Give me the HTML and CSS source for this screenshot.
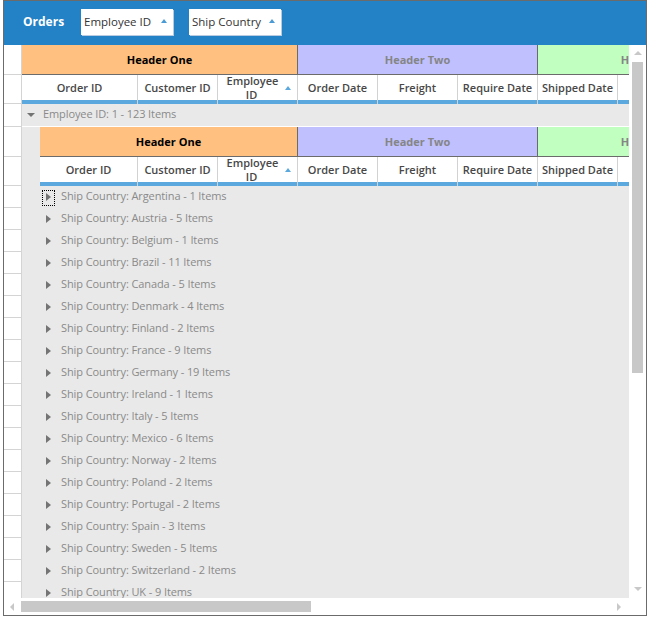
FILE: index.html
```html
<!DOCTYPE html>
<html>
<head>
<meta charset="utf-8">
<link rel="stylesheet" href="styles.css">
</head>
<body>
<div class="frame">
  <div class="toolbar">
    <span class="title">Orders</span>
    <div class="dd"><span>Employee ID</span><span class="dd-arrow"></span></div>
    <div class="dd"><span>Ship Country</span><span class="dd-arrow"></span></div>
  </div>
  <div class="body">
    <div class="main">
      <div class="viewport">
        <div class="hrow1">
          <div class="rh rh-h1"></div>
          <div class="band band-one w275">Header One</div>
          <div class="band band-two">Header Two</div>
          <div class="band band-three">Header Three</div>
        </div>
        <div class="hrow2">
          <div class="rh rh-h2"></div>
          <div class="ch w116">Order ID</div>
          <div class="ch">Customer ID</div>
          <div class="ch sort"><span>Employee ID</span><span class="sort-arrow"></span></div>
          <div class="ch">Order Date</div>
          <div class="ch">Freight</div>
          <div class="ch">Require Date</div>
          <div class="ch">Shipped Date</div>
          <div class="ch"></div>
        </div>
        <div class="grow">
          <div class="rh rh-group"></div>
          <div class="group-cell">
            <span class="tog-down"></span>
            <span class="gtext">Employee ID: 1 - 123 Items</span>
          </div>
        </div>
        <div class="nested">
          <div class="rh-col">
            <div class="rh rh-n1"></div>
            <div class="rh rh-n2"></div>
          </div>
          <div class="indent"></div>
          <div class="ngrid">
            <div class="hrow1 nrow1">
              <div class="band band-one w257">Header One</div>
              <div class="band band-two">Header Two</div>
              <div class="band band-three">Header Three</div>
            </div>
            <div class="hrow2">
              <div class="ch w98">Order ID</div>
              <div class="ch">Customer ID</div>
              <div class="ch sort"><span>Employee ID</span><span class="sort-arrow"></span></div>
              <div class="ch">Order Date</div>
              <div class="ch">Freight</div>
              <div class="ch">Require Date</div>
              <div class="ch">Shipped Date</div>
              <div class="ch"></div>
            </div>
          </div>
        </div>
        <div class="rows">
          <div class="row"><div class="rh rh-row"></div><div class="indent"></div><div class="sub"><span class="tog-right focus"></span><span class="gtext">Ship Country: Argentina - 1 Items</span></div></div>
          <div class="row"><div class="rh rh-row"></div><div class="indent"></div><div class="sub"><span class="tog-right"></span><span class="gtext">Ship Country: Austria - 5 Items</span></div></div>
          <div class="row"><div class="rh rh-row"></div><div class="indent"></div><div class="sub"><span class="tog-right"></span><span class="gtext">Ship Country: Belgium - 1 Items</span></div></div>
          <div class="row"><div class="rh rh-row"></div><div class="indent"></div><div class="sub"><span class="tog-right"></span><span class="gtext">Ship Country: Brazil - 11 Items</span></div></div>
          <div class="row"><div class="rh rh-row"></div><div class="indent"></div><div class="sub"><span class="tog-right"></span><span class="gtext">Ship Country: Canada - 5 Items</span></div></div>
          <div class="row"><div class="rh rh-row"></div><div class="indent"></div><div class="sub"><span class="tog-right"></span><span class="gtext">Ship Country: Denmark - 4 Items</span></div></div>
          <div class="row"><div class="rh rh-row"></div><div class="indent"></div><div class="sub"><span class="tog-right"></span><span class="gtext">Ship Country: Finland - 2 Items</span></div></div>
          <div class="row"><div class="rh rh-row"></div><div class="indent"></div><div class="sub"><span class="tog-right"></span><span class="gtext">Ship Country: France - 9 Items</span></div></div>
          <div class="row"><div class="rh rh-row"></div><div class="indent"></div><div class="sub"><span class="tog-right"></span><span class="gtext">Ship Country: Germany - 19 Items</span></div></div>
          <div class="row"><div class="rh rh-row"></div><div class="indent"></div><div class="sub"><span class="tog-right"></span><span class="gtext">Ship Country: Ireland - 1 Items</span></div></div>
          <div class="row"><div class="rh rh-row"></div><div class="indent"></div><div class="sub"><span class="tog-right"></span><span class="gtext">Ship Country: Italy - 5 Items</span></div></div>
          <div class="row"><div class="rh rh-row"></div><div class="indent"></div><div class="sub"><span class="tog-right"></span><span class="gtext">Ship Country: Mexico - 6 Items</span></div></div>
          <div class="row"><div class="rh rh-row"></div><div class="indent"></div><div class="sub"><span class="tog-right"></span><span class="gtext">Ship Country: Norway - 2 Items</span></div></div>
          <div class="row"><div class="rh rh-row"></div><div class="indent"></div><div class="sub"><span class="tog-right"></span><span class="gtext">Ship Country: Poland - 2 Items</span></div></div>
          <div class="row"><div class="rh rh-row"></div><div class="indent"></div><div class="sub"><span class="tog-right"></span><span class="gtext">Ship Country: Portugal - 2 Items</span></div></div>
          <div class="row"><div class="rh rh-row"></div><div class="indent"></div><div class="sub"><span class="tog-right"></span><span class="gtext">Ship Country: Spain - 3 Items</span></div></div>
          <div class="row"><div class="rh rh-row"></div><div class="indent"></div><div class="sub"><span class="tog-right"></span><span class="gtext">Ship Country: Sweden - 5 Items</span></div></div>
          <div class="row"><div class="rh rh-row"></div><div class="indent"></div><div class="sub"><span class="tog-right"></span><span class="gtext">Ship Country: Switzerland - 2 Items</span></div></div>
          <div class="row"><div class="rh rh-row"></div><div class="indent"></div><div class="sub"><span class="tog-right"></span><span class="gtext">Ship Country: UK - 9 Items</span></div></div>
        </div>
      </div>
      <div class="hscroll">
        <span class="arr arr-left"></span>
        <div class="htrack"><div class="hthumb"></div></div>
        <span class="arr arr-right"></span>
      </div>
    </div>
    <div class="vscroll">
      <span class="arr arr-up"></span>
      <div class="vtrack"><div class="vthumb"></div></div>
      <span class="arr arr-down"></span>
      <div class="corner"></div>
    </div>
  </div>
</div>
</body>
</html>
```
FILE: styles.css
```css
* { box-sizing: border-box; }
html, body { margin: 0; padding: 0; background: #ffffff; }
body {
  font-family: "Open Sans", "Noto Sans", sans-serif;
  font-size: 11px;
  color: #333;
}
.frame {
  margin-left: 3px;
  width: 644px;
  height: 616px;
  border: 1px solid #6b6b6b;
  display: flex;
  flex-direction: column;
  overflow: hidden;
}
.toolbar {
  height: 44px;
  background: #2382c6;
  display: flex;
  align-items: flex-start;
  padding-left: 19px;
  padding-top: 8px;
  flex: none;
}
.title {
  color: #fff;
  font-weight: 700;
  font-size: 12px;
  width: 58px;
  line-height: 26px;
}
.dd {
  width: 92px;
  height: 26px;
  background: #fff;
  box-shadow: 1px 1px 0 #b8cbe0;
  margin-right: 16px;
  display: flex;
  align-items: center;
  justify-content: space-between;
  padding: 0 5px 2px 3px;
  font-size: 11.5px;
  color: #333;
}
.dd-arrow {
  width: 0; height: 0;
  border-left: 3.5px solid transparent;
  border-right: 3.5px solid transparent;
  border-bottom: 4px solid #4a9ad6;
  margin-right: 1px;
}
.body { display: flex; height: 570px; flex: none; }
.main { width: 625px; display: flex; flex-direction: column; }
.viewport {
  height: 553px;
  overflow: hidden;
  background: #e9e9e9;
  display: flex;
  flex-direction: column;
}
.viewport > * { flex: none; }
.rh {
  width: 18px;
  flex: none;
  background: #fff;
  border-right: 1px solid #d4d4d4;
  border-bottom: 1px solid #d4d4d4;
}
.hrow1 { display: flex; height: 30px; background: #fff; }
.band {
  flex: none;
  width: 240px;
  height: 30px;
  border-right: 1px solid #6b6b6b;
  border-bottom: 1px solid #6b6b6b;
  display: flex;
  align-items: center;
  justify-content: center;
  font-weight: 700;
  font-size: 11px;
  padding-bottom: 1px;
}
.w275 { width: 276px; }
.w257 { width: 258px; }
.band-one { background: #ffc080; color: #000; }
.band-two { background: #c0c0ff; color: #858585; }
.band-three { background: #c0ffc0; color: #858585; border-right: none; }
.hrow2 { display: flex; height: 29px; }
.ch {
  flex: none;
  width: 80px;
  height: 29px;
  border-right: 1px solid #d2d2d2;
  background: linear-gradient(#fff 0, #fff 25px, #5aa8de 25px, #5aa8de 29px);
  display: flex;
  align-items: center;
  justify-content: center;
  padding-bottom: 5px;
  font-weight: 600;
  color: #474747;
  font-size: 11px;
  white-space: nowrap;
}
.w116 { width: 116px; }
.w98 { width: 98px; }
.ch.sort {
  white-space: normal;
  text-align: center;
  line-height: 14px;
  padding-right: 12px;
  padding-bottom: 4px;
  position: relative;
}
.ch.sort span:first-child { width: 50px; }
.sort-arrow {
  position: absolute;
  right: 6px;
  top: 11px;
  width: 0; height: 0;
  border-left: 3.5px solid transparent;
  border-right: 3.5px solid transparent;
  border-bottom: 4px solid #5aa8de;
}
.grow { display: flex; height: 23px; }
.rh-h1 { height: 30px; }
.rh-h2 { height: 29px; }
.rh-group { height: 23px; }
.rh-row { height: 22px; }
.group-cell {
  flex: 1;
  display: flex;
  align-items: center;
  border-bottom: 1px solid #fff;
  padding-bottom: 3px;
}
.tog-down {
  width: 0; height: 0;
  border-left: 4px solid transparent;
  border-right: 4px solid transparent;
  border-top: 4px solid #737373;
  margin-left: 5px;
  margin-right: 8px;
  margin-top: 2px;
}
.gtext { color: #8a8a8a; font-size: 11px; letter-spacing: -0.1px; }
.nested { display: flex; height: 59px; }
.rh-col { display: flex; flex-direction: column; }
.rh-n1 { height: 30px; }
.rh-n2 { height: 29px; }
.indent { width: 18px; flex: none; }
.ngrid { flex: 1; display: flex; flex-direction: column; overflow: hidden; }
.nrow1 { height: 30px; }
.rows { display: flex; flex-direction: column; }
.row { display: flex; height: 22px; flex: none; }
.sub {
  flex: 1;
  display: flex;
  align-items: center;
  padding-bottom: 3px;
}
.tog-right {
  width: 0; height: 0;
  border-top: 4px solid transparent;
  border-bottom: 4px solid transparent;
  border-left: 5px solid #747474;
  margin-left: 6px;
  margin-right: 10px;
  margin-top: 2px;
  position: relative;
}
.tog-right.focus::after {
  content: "";
  position: absolute;
  left: -9px;
  top: -7px;
  width: 11px;
  height: 14px;
  border: 1px dotted #000;
}
.hscroll {
  height: 17px;
  background: #fff;
  display: flex;
  align-items: center;
  flex: none;
}
.htrack { flex: 1; height: 11px; display: flex; margin: 0 4px 0 7px; }
.hthumb { width: 290px; height: 11px; background: #c8c8c8; }
.arr { width: 0; height: 0; flex: none; }
.arr-left {
  border-top: 4px solid transparent;
  border-bottom: 4px solid transparent;
  border-right: 4px solid #c8c8c8;
  margin-left: 6px;
}
.arr-right {
  border-top: 4px solid transparent;
  border-bottom: 4px solid transparent;
  border-left: 4px solid #c8c8c8;
  margin-right: 8px;
}
.vscroll {
  width: 17px;
  background: #fff;
  display: flex;
  flex-direction: column;
  align-items: center;
}
.arr-up {
  border-left: 4px solid transparent;
  border-right: 4px solid transparent;
  border-bottom: 4px solid #c8c8c8;
  margin-top: 6px;
}
.vtrack { flex: 1; width: 11px; padding-top: 7px; }
.vthumb { width: 11px; height: 311px; background: #c8c8c8; }
.arr-down {
  border-left: 4px solid transparent;
  border-right: 4px solid transparent;
  border-top: 4px solid #c8c8c8;
  margin-bottom: 7px;
}
.corner { height: 17px; flex: none; }
```
